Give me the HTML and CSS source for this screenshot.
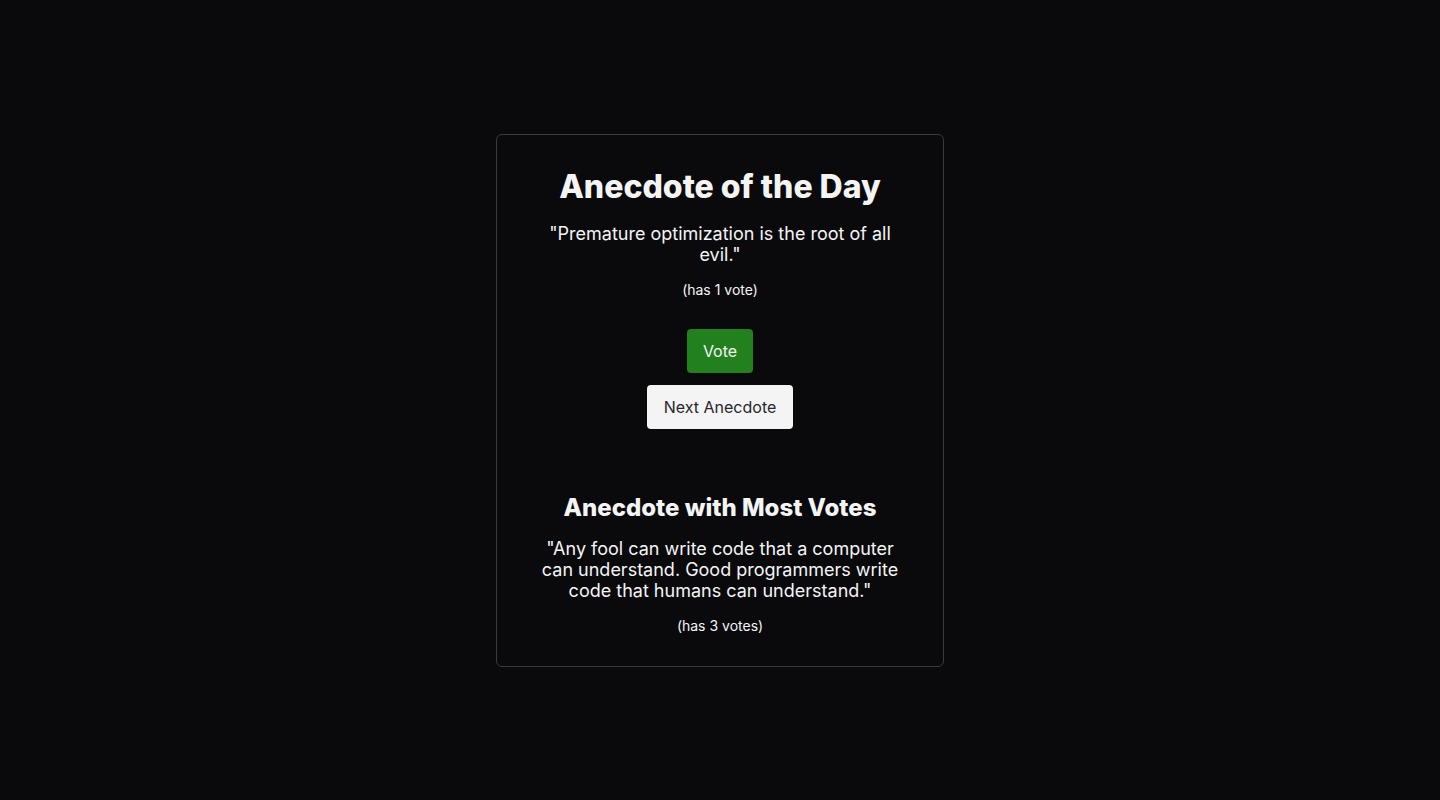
FILE: index.html
```html
<!DOCTYPE html>
<html lang="en">
<head>
<meta charset="utf-8">
<title>Anecdotes</title>
<link rel="stylesheet" href="styles.css">
</head>
<body>
<main class="page">
  <section class="card">
    <h1 class="title">Anecdote of the Day</h1>
    <p class="quote">"Premature optimization is the root of all evil."</p>
    <p class="votes">(has 1 vote)</p>
    <div class="actions">
      <button class="btn btn-vote">Vote</button>
      <button class="btn btn-next">Next Anecdote</button>
    </div>
    <h2 class="subtitle">Anecdote with Most Votes</h2>
    <p class="quote">"Any fool can write code that a computer can understand. Good programmers write code that humans can understand."</p>
    <p class="votes">(has 3 votes)</p>
  </section>
</main>
</body>
</html>
```

FILE: styles.css
```css
* { box-sizing: border-box; }
html, body { margin: 0; padding: 0; }
body {
  background: #0a0a0c;
  color: #f4f4f5;
  font-family: Inter, "Noto Sans", sans-serif;
}
.page {
  min-height: 800px;
  display: flex;
  align-items: center;
  justify-content: center;
}
.card {
  width: 448px;
  border: 1px solid #3a3a3e;
  border-radius: 6px;
  padding: 33px 32px 32px;
  text-align: center;
}
.title {
  margin: 0 0 17px;
  font-size: 32px;
  font-weight: 800;
  line-height: 38px;
}
.subtitle {
  margin: 64px 0 16px;
  font-size: 24px;
  font-weight: 800;
  line-height: 29px;
}
.quote {
  margin: 0 0 16px;
  font-size: 18px;
  line-height: 21px;
}
.votes {
  margin: 0;
  font-size: 14px;
  line-height: 17px;
}
.actions {
  display: flex;
  flex-direction: column;
  align-items: center;
  gap: 12px;
  margin-top: 31px;
}
.btn {
  font-family: inherit;
  font-size: 16px;
  height: 44px;
  padding: 0 16px;
  border: none;
  border-radius: 4px;
  cursor: pointer;
}
.btn-vote {
  background: #22801f;
  color: #f4f4f5;
}
.btn-next {
  background: #f4f4f5;
  color: #27272a;
  padding: 0 17px;
}
```
